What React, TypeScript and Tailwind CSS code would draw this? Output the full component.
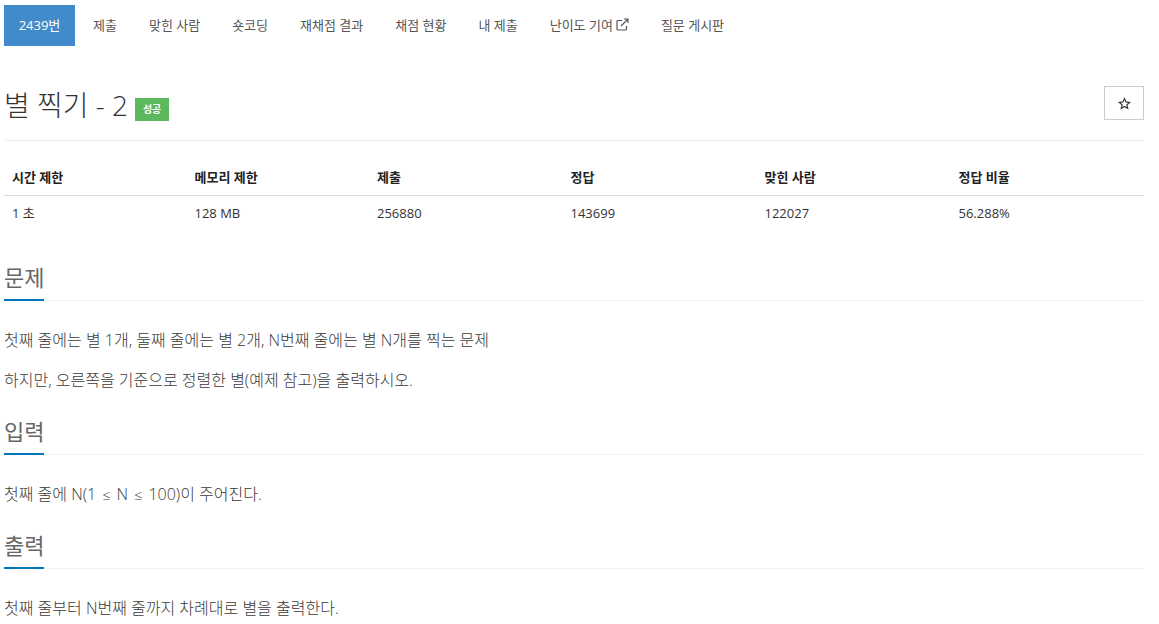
import React from "react";

const font = { fontFamily: '"Open Sans", "Noto Sans CJK KR", sans-serif' };
const tabs = ["제출", "맞힌 사람", "숏코딩", "재채점 결과", "채점 현황", "내 제출"];
const cols = [
  ["시간 제한", "1 초", "w-[182.5px]"],
  ["메모리 제한", "128 MB", "w-[182.5px]"],
  ["제출", "256880", "w-[193.5px]"],
  ["정답", "143699", "w-[194px]"],
  ["맞힌 사람", "122027", "w-[194px]"],
  ["정답 비율", "56.288%", "flex-1"],
];

function Tab({ children }: { children: React.ReactNode }) {
  return (
    <div className="px-[16px] h-[41px] flex items-center text-[13px] text-[#555] whitespace-nowrap">
      {children}
    </div>
  );
}

function Heading({ title }: { title: string }) {
  return (
    <div className="border-b border-dotted border-[#e5e5e5] h-[37px]">
      <h2 className="w-fit min-w-[40px] h-[37px] border-b-2 border-[#0076c0] text-[22px] leading-[27px] text-[#666] font-normal">
        {title}
      </h2>
    </div>
  );
}

function Para({ children }: { children: React.ReactNode }) {
  return <p className="text-[16px] leading-[24px] text-[#3a3a3a] font-light">{children}</p>;
}

function Le() {
  return <span className="mx-[2px] text-[14px]">≤</span>;
}

export default function App() {
  return (
    <div style={font} className="w-[1159px] h-[624px] overflow-hidden bg-white px-1 pr-[15px] pt-[5px] text-[#333]">
      <nav className="flex h-[41px]">
        <div className="w-[71px] mr-[2px] h-[41px] flex items-center justify-center bg-[#428bca] text-white text-[13px]">2439번</div>
        {tabs.map((t) => (
          <Tab key={t}>{t}</Tab>
        ))}
        <Tab>
          난이도 기여
          <svg className="ml-[3px] mb-[2px]" width="13" height="13" viewBox="0 0 13 13" fill="none" stroke="#555" strokeWidth="1.2">
            <path d="M6 2.5H2a1 1 0 0 0-1 1V11a1 1 0 0 0 1 1h7.5a1 1 0 0 0 1-1V8" />
            <path d="M5 8l6.5-6.5M8 1h4v4" />
          </svg>
        </Tab>
        <Tab>질문 게시판</Tab>
      </nav>

      <div className="mt-[40px] h-[55px] border-b border-[#eee] flex justify-between items-start">
        <div className="flex items-center h-[38px]">
          <h1 className="text-[28px] leading-[36px] text-[#333] font-light">별 찍기 - 2</h1>
          <span className="ml-[7px] mt-2 w-[34px] h-[23px] flex items-center justify-center bg-[#5cb85c] text-white text-[10px] font-bold">성공</span>
        </div>
        <button className="w-[40px] h-[34px] border border-[#ccc] flex items-center justify-center">
          <svg width="13" height="13" viewBox="0 0 24 24" fill="none" stroke="#333" strokeWidth="2.2">
            <path d="M12 3l2.8 6.1 6.7.8-5 4.5 1.4 6.6L12 17.6 6.1 21l1.4-6.6-5-4.5 6.7-.8z" />
          </svg>
        </button>
      </div>

      <div className="mt-[20px] flex text-[13px]">
        {cols.map(([h, v, w]) => (
          <div key={h} className={w}>
            <div className="h-[35px] border-b border-[#ddd] px-2 flex items-center font-bold text-[#222]">{h}</div>
            <div className="h-[36px] px-2 flex items-center text-[#333]">{v}</div>
          </div>
        ))}
      </div>

      <div className="mt-[32px]">
        <Heading title="문제" />
        <div className="mt-[27px] flex flex-col gap-[16px]">
          <Para>첫째 줄에는 별 1개, 둘째 줄에는 별 2개, N번째 줄에는 별 N개를 찍는 문제</Para>
          <Para>하지만, 오른쪽을 기준으로 정렬한 별(예제 참고)을 출력하시오.</Para>
        </div>
      </div>
      <div className="mt-[26px]">
        <Heading title="입력" />
        <div className="mt-[27px]">
          <Para>첫째 줄에 N(1 <Le /> N <Le /> 100)이 주어진다.</Para>
        </div>
      </div>
      <div className="mt-[25px]">
        <Heading title="출력" />
        <div className="mt-[27px]">
          <Para>첫째 줄부터 N번째 줄까지 차례대로 별을 출력한다.</Para>
        </div>
      </div>
    </div>
  );
}
